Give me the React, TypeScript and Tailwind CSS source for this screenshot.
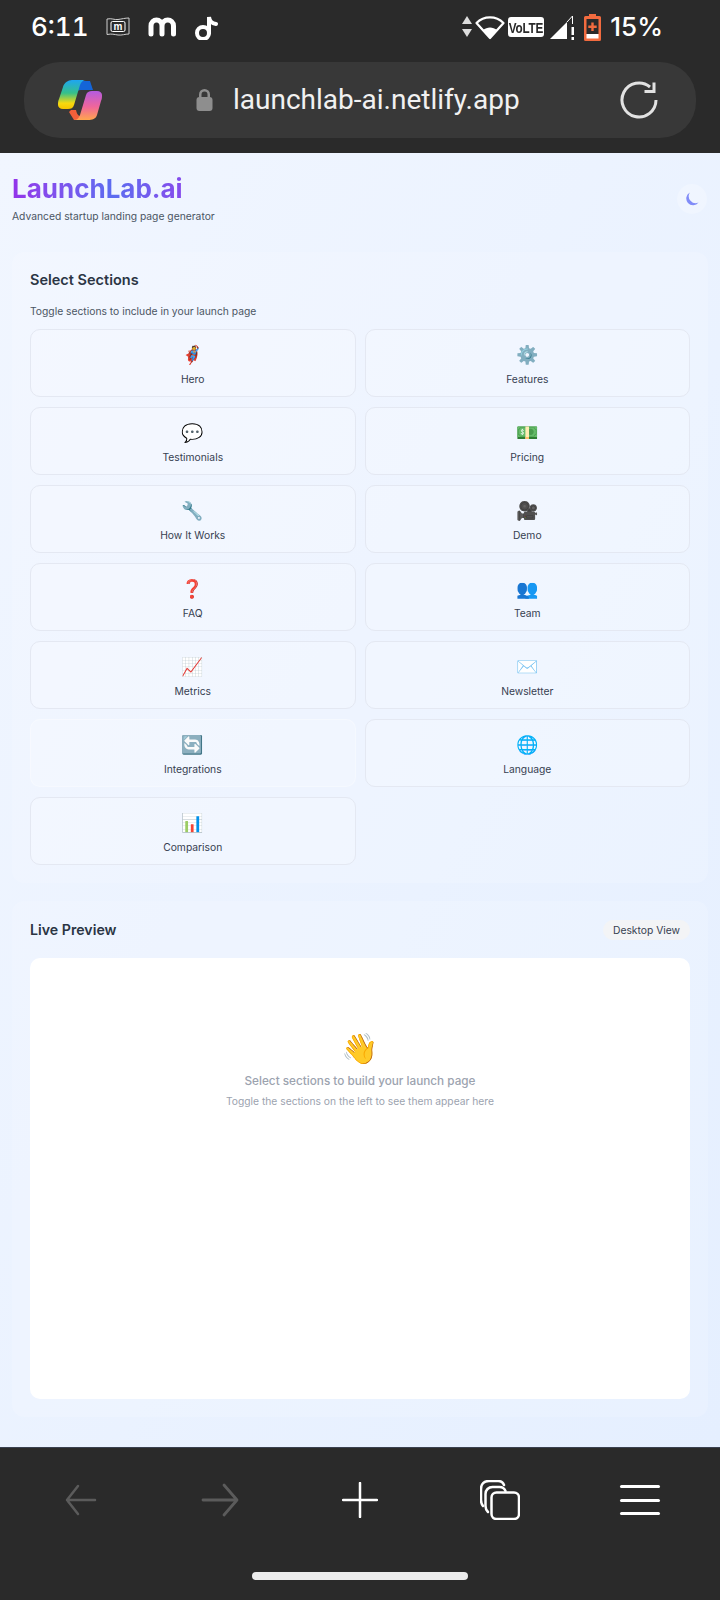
const sections = [
  { icon: '🦸', label: 'Hero' },
  { icon: '⚙️', label: 'Features' },
  { icon: '💬', label: 'Testimonials' },
  { icon: '💵', label: 'Pricing' },
  { icon: '🔧', label: 'How It Works' },
  { icon: '🎥', label: 'Demo' },
  { icon: '❓', label: 'FAQ' },
  { icon: '👥', label: 'Team' },
  { icon: '📈', label: 'Metrics' },
  { icon: '✉️', label: 'Newsletter' },
  { icon: '🔄', label: 'Integrations', faint: true },
  { icon: '🌐', label: 'Language' },
  { icon: '📊', label: 'Comparison' },
];

function StatusBar() {
  return (
    <div className="flex h-[54px] items-center justify-between pl-[31px] pr-[57px] text-white">
      <div className="flex items-center">
        <span className="font-['Inter',sans-serif] text-[26px] font-medium leading-none tabular-nums">6:11</span>
        <svg className="ml-[17px]" width="24" height="20" viewBox="0 0 24 20" fill="none" stroke="#cfcfcf" strokeWidth="1">
          <path d="M1 2c5-1 7 1 11 .5S19 1 23 1v16c-4 0-7 1.500-11 1s-6-1.500-11-.5z" />
          <rect x="5" y="4.500" width="14" height="10" rx="1.500" stroke="#fff" />
          <text x="12" y="12.500" textAnchor="middle" fill="#fff" stroke="none" fontSize="10" fontWeight="700" fontFamily="Liberation Sans">m</text>
        </svg>
        <svg className="ml-[18px]" width="28" height="20" viewBox="0 0 28 20" fill="none" stroke="#fff" strokeWidth="5" strokeLinecap="round">
          <path d="M3 17V9c0-8 11-8 11 0v8M14 9c0-8 11.500-8 11.500 0v8" />
        </svg>
        <svg className="ml-[18px]" width="24" height="26" viewBox="0 0 24 26" fill="none" stroke="#fff" strokeWidth="4">
          <circle cx="9" cy="19" r="6" />
          <path d="M15 19V3c.500 4 3 6.500 7 7" strokeLinecap="round" />
        </svg>
      </div>
      <div className="flex items-center">
        <svg width="10" height="22" viewBox="0 0 10 22" fill="#ddd">
          <path d="M5 0l5 8H0zM0 13h10l-5 8z" />
        </svg>
        <svg className="ml-[3px]" width="30" height="25" viewBox="0 0 30 25" fill="none">
          <path d="M1.500 8C9 .5 21 .5 28.500 8L15 23z" stroke="#fff" strokeWidth="2.200" strokeLinejoin="round" />
          <path d="M8 15c4-3.500 10-3.500 14 0l-7 8.500z" fill="#fff" />
        </svg>
        <span className="ml-[3px] flex h-[20px] w-[36px] items-center justify-center overflow-hidden rounded-[3px] bg-white">
          <span className="font-['Liberation_Sans',sans-serif] text-[15px] font-bold leading-none tracking-[-0.3px] text-[#2a2a2a] [transform:scaleX(0.78)]">VoLTE</span>
        </span>
        <svg className="ml-[5px]" width="26" height="25" viewBox="0 0 26 25" fill="none">
          <path d="M1 24L18 7v17z" fill="#fff" />
          <path d="M18 7l5.500-6v8" stroke="#fff" strokeWidth="1" />
          <rect x="22.500" y="12" width="2.500" height="8" fill="#fff" />
          <rect x="22.500" y="22" width="2.500" height="3" fill="#fff" />
        </svg>
        <svg className="ml-[9px]" width="17" height="27" viewBox="0 0 17 27">
          <path d="M5 0h7v2h3.500a1.500 1.500 0 0 1 1.500 1.500v22a1.500 1.500 0 0 1-1.500 1.500h-14A1.500 1.500 0 0 1 0 25.500v-22A1.500 1.500 0 0 1 1.500 2H5z" fill="#f26b3f" />
          <rect x="2.500" y="5" width="12" height="15" fill="#2a2a2a" />
          <rect x="2.500" y="20" width="12" height="4.500" fill="#fff" />
          <path d="M7.300 8.500h2.400v3h3v2.400h-3v3H7.300v-3h-3v-2.400h3z" fill="#f26b3f" />
        </svg>
        <span className="ml-[9px] font-['Inter',sans-serif] text-[26px] font-medium leading-none">15%</span>
      </div>
    </div>
  );
}

function CopilotLogo() {
  return (
    <svg width="44" height="41" viewBox="0 0 44 41">
      <defs>
        <linearGradient id="cl" x1="0" y1="0" x2="0" y2="1">
          <stop offset="0" stopColor="#1ea5f2" />
          <stop offset="0.45" stopColor="#35c08a" />
          <stop offset="0.8" stopColor="#f7d90f" />
          <stop offset="1" stopColor="#f6c400" />
        </linearGradient>
        <linearGradient id="cr" x1="0" y1="0" x2="0" y2="1">
          <stop offset="0" stopColor="#b45be0" />
          <stop offset="0.55" stopColor="#f0669a" />
          <stop offset="1" stopColor="#ffa64d" />
        </linearGradient>
      </defs>
      <path d="M16 13L21 1h11l3 9-12 0c-3 0-4 1-5 3z" fill="#1465d8" />
      <path d="M13 30l-2 2 5 8h12l-5-4c-3 0-4-2-5-6z" fill="#f2603a" />
      <path d="M14 0h14c-3 0-5 2-6 5l-6 20c-1 3-3 4-6 4H5c-3 0-5-2-5-4 0-2 0-4 1-6L5 7c1-4 5-7 9-7z" fill="url(#cl)" />
      <path d="M30 40H16c3 0 5-2 6-5l6-20c1-3 3-4 6-4h5c3 0 5 2 5 4 0 2 0 4-1 6l-4 14c-1 4-5 5-9 5z" fill="url(#cr)" />
    </svg>
  );
}

function AddressBar() {
  return (
    <div className="mx-[24px] mt-[8px] flex h-[76px] items-center rounded-[36px] bg-[#383838] pl-[34px] pr-[38px]">
      <CopilotLogo />
      <svg className="ml-[94px]" width="17" height="22" viewBox="0 0 17 22" fill="#8e8e8e">
        <path d="M3 8V5.500a5.500 5.500 0 0 1 11 0V8H11.500V5.500a3 3 0 0 0-6 0V8z" />
        <rect x="0.500" y="8" width="16" height="14" rx="3" />
      </svg>
      <span className="ml-[20px] font-['Roboto',sans-serif] text-[28px] leading-none text-[#f1f1f1]">launchlab-ai.netlify.app</span>
      <svg className="ml-auto" width="38" height="38" viewBox="0 0 38 38" fill="none" stroke="#e2e2e2" strokeWidth="3">
        <path d="M30 6A17 17 0 1 0 36 19" />
        <path d="M34 1.500v9H24.500" />
      </svg>
    </div>
  );
}

function SectionCard({ icon, label, faint }: { icon: string; label: string; faint?: boolean }) {
  return (
    <button className={`flex h-[68px] flex-col items-center rounded-[10px] border bg-white/20 pt-[12px] ${faint ? 'border-white/30' : 'border-[#e4e8f2]'}`}>
      <span className="h-[25px] font-['Noto_Color_Emoji','Noto_Sans',sans-serif] text-[18px] leading-[25px] text-[#374151]">{icon}</span>
      <span className="mt-[4px] text-[10.300px] leading-[16px] text-[#374151]">{label}</span>
    </button>
  );
}

function NavBar() {
  return (
    <div className="flex h-[153px] flex-col border-t border-[#3a4150] bg-[#2a2a2a]">
      <div className="mt-[32px] grid grid-cols-5 px-[10px]">
        <div className="flex h-[40px] items-center justify-center">
          <svg className="ml-[2px]" width="32" height="32" viewBox="0 0 32 32" fill="none" stroke="#5b5b5b" strokeWidth="2.500" strokeLinecap="round" strokeLinejoin="round">
            <path d="M30 16H2M13 2L2 16l11 14" />
          </svg>
        </div>
        <div className="flex h-[40px] items-center justify-center">
          <svg width="38" height="34" viewBox="0 0 38 34" fill="none" stroke="#5b5b5b" strokeWidth="2.800" strokeLinecap="round" strokeLinejoin="round">
            <path d="M2 17h33M23 2l13 15-13 15" />
          </svg>
        </div>
        <div className="flex h-[40px] items-center justify-center">
          <svg width="36" height="36" viewBox="0 0 36 36" fill="none" stroke="#fff" strokeWidth="2.500" strokeLinecap="round">
            <path d="M18 1v34M1 18h34" />
          </svg>
        </div>
        <div className="flex h-[40px] items-center justify-center">
          <svg width="40" height="40" viewBox="0 0 40 40" fill="none" stroke="#fff" strokeWidth="2.500" strokeLinecap="round">
            <rect x="11.500" y="12.500" width="27.500" height="26.500" rx="5" />
            <path d="M8 32c-2-2-2.500-4-2.500-6V14c0-4 3-7 7-7h7c3 0 5 1.500 6 4" />
            <path d="M3 26c-1.500-2-2-4-2-6V9c0-5 3-8 8-8h9c3 0 5 1.500 6 4" />
          </svg>
        </div>
        <div className="flex h-[40px] items-center justify-center">
          <div className="flex w-[40px] flex-col gap-[10.500px]">
            <div className="h-[3px] rounded-full bg-white" />
            <div className="h-[3px] rounded-full bg-white" />
            <div className="h-[3px] rounded-full bg-white" />
          </div>
        </div>
      </div>
      <div className="mx-auto mt-[52px] h-[8px] w-[216px] rounded-full bg-[#ececec]" />
    </div>
  );
}

export default function App() {
  return (
    <div className="flex h-[1600px] w-[720px] flex-col bg-[#2a2a2a] font-['Inter',sans-serif]">
      <div className="h-[153px] shrink-0">
        <StatusBar />
        <AddressBar />
      </div>

      <main className="flex-1 bg-gradient-to-br from-[#f1f6ff] to-[#e5efff] px-[12px] pt-[22px]">
        <header className="flex items-start justify-between">
          <div>
            <h1 className="bg-gradient-to-r from-[#9333ea] via-[#5b6cf0] to-[#9333ea] bg-clip-text text-[26px] font-bold leading-[28px] text-transparent">
              LaunchLab.ai
            </h1>
            <p className="mt-[6px] text-[10.300px] leading-[14px] text-[#4b5563]">Advanced startup landing page generator</p>
          </div>
          <div className="mr-[1px] mt-[9px] flex h-[30px] w-[30px] items-center justify-center rounded-full bg-white/25">
            <svg width="14" height="14" viewBox="0 0 16 16" fill="#818cf8">
              <path d="M5.500 0.500A7.800 7.800 0 1 0 15.500 12 8 8 0 0 1 5.500 0.500z" />
            </svg>
          </div>
        </header>

        <section className="mt-[29px] rounded-[12px] bg-white/15 px-[18px] pb-[18px] pt-[18px]">
          <h2 className="text-[14.500px] font-semibold leading-[20px] text-[#2b3544]">Select Sections</h2>
          <p className="mt-[14px] text-[10.300px] leading-[14px] text-[#4b5563]">Toggle sections to include in your launch page</p>
          <div className="mt-[11px] grid grid-cols-2 gap-x-[9px] gap-y-[10px]">
            {sections.map((s) => (
              <SectionCard key={s.label} icon={s.icon} label={s.label} faint={s.faint} />
            ))}
          </div>
        </section>

        <section className="mt-[18px] rounded-[12px] bg-white/15 px-[18px] pb-[18px] pt-[19px]">
          <div className="flex items-center justify-between">
            <h2 className="text-[14.200px] font-semibold leading-[20px] text-[#2b3544]">Live Preview</h2>
            <span className="rounded-full bg-[#f3f4f6] px-[10px] py-[3px] text-[10.300px] leading-[14px] text-[#374151]">Desktop View</span>
          </div>
          <div className="mt-[18px] flex h-[441px] flex-col items-center rounded-[10px] bg-white pt-[73px]">
            <span className="font-['Noto_Color_Emoji',sans-serif] text-[30px] leading-[36px]">👋</span>
            <p className="mt-[5px] text-[11.750px] font-medium leading-[18px] text-[#9ca3af]">Select sections to build your launch page</p>
            <p className="mt-[4px] text-[10.270px] leading-[14px] text-[#9ca3af]">Toggle the sections on the left to see them appear here</p>
          </div>
        </section>
      </main>

      <NavBar />
    </div>
  );
}
